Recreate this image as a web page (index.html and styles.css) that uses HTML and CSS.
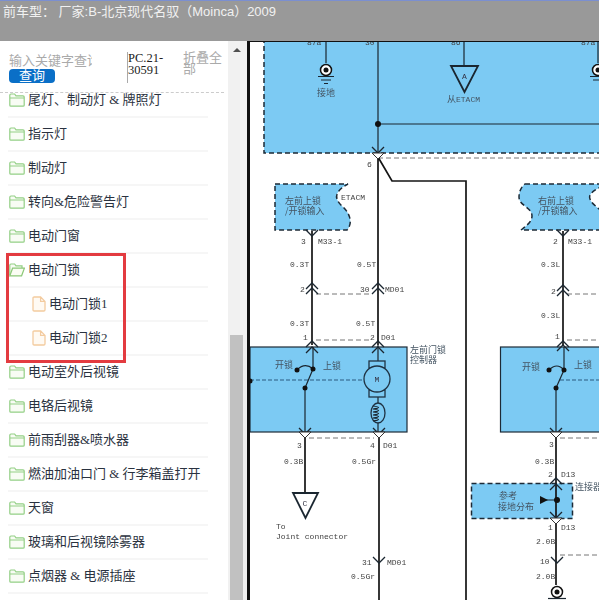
FILE: index.html
```html
<!DOCTYPE html>
<html lang="zh">
<head>
<meta charset="utf-8">
<title>电动门锁</title>
<link rel="stylesheet" href="styles.css">
</head>
<body>
<svg class="defs" width="0" height="0">
  <defs>
    <symbol id="folder" viewBox="0 0 16 14"><path class="fo" d="M.8 12.2V2.2Q.8 1 2 1H5.6L7 2.8H14Q15.2 2.8 15.2 4V12.2Q15.2 13.2 14 13.2H2Q.8 13.2.8 12.2ZM.8 5H15.2"/></symbol>
    <symbol id="folder-open" viewBox="0 0 16 14"><path class="fo" d="M.8 12V2.2Q.8 1 2 1H5.6L7 2.8H13V5"/><path class="fo-open" d="M.8 12.8 3.6 5.2H15.4L12.6 12.8Z"/></symbol>
    <symbol id="file" viewBox="0 0 14 16"><path class="fi" d="M1 2.2Q1 1 2.2 1H8.6L13 5.4V13.8Q13 15 11.8 15H2.2Q1 15 1 13.8ZM8.6 1V5.4H13"/></symbol>
    <path id="vee" d="M-6-6 0 0 6-6"/>
    <path id="hat" d="M-6 6 0 0 6 6"/>
  </defs>
</svg>

<header class="topbar">前车型： 厂家:B-北京现代名驭（Moinca）2009</header>

<div class="main">
  <aside class="sidebar">
    <div class="panel">
      <div class="search">
        <div class="search-left">
          <input class="kw" type="text" placeholder="输入关键字查询">
          <button class="go" type="button">查询</button>
        </div>
        <div class="code">PC.21-30591</div>
        <div class="fold">折叠全部</div>
      </div>
      <ul class="tree">
        <li class="row first"><svg class="ico"><use href="#folder"/></svg>尾灯、制动灯 &amp; 牌照灯</li>
        <li class="row"><svg class="ico"><use href="#folder"/></svg>指示灯</li>
        <li class="row"><svg class="ico"><use href="#folder"/></svg>制动灯</li>
        <li class="row"><svg class="ico"><use href="#folder"/></svg>转向&amp;危险警告灯</li>
        <li class="row"><svg class="ico"><use href="#folder"/></svg>电动门窗</li>
        <li class="row"><svg class="ico"><use href="#folder-open"/></svg>电动门锁</li>
        <li class="row child"><svg class="ico-file"><use href="#file"/></svg>电动门锁1</li>
        <li class="row child"><svg class="ico-file"><use href="#file"/></svg>电动门锁2</li>
        <li class="row"><svg class="ico"><use href="#folder"/></svg>电动室外后视镜</li>
        <li class="row"><svg class="ico"><use href="#folder"/></svg>电铬后视镜</li>
        <li class="row"><svg class="ico"><use href="#folder"/></svg>前雨刮器&amp;喷水器</li>
        <li class="row"><svg class="ico"><use href="#folder"/></svg>燃油加油口门 &amp; 行李箱盖打开</li>
        <li class="row"><svg class="ico"><use href="#folder"/></svg>天窗</li>
        <li class="row"><svg class="ico"><use href="#folder"/></svg>玻璃和后视镜除雾器</li>
        <li class="row"><svg class="ico"><use href="#folder"/></svg>点烟器 &amp; 电源插座</li>
      </ul>
      <div class="mark"></div>
    </div>
    <div class="scroll">
      <div class="arrow"></div>
      <div class="thumb"></div>
    </div>
  </aside>

  <section class="pane">
    <svg class="diagram" viewBox="250 42 349 558" width="349" height="558">
      <!-- blue areas -->
      <path class="area dash" d="M264 30V153H620V30Z"/>
      <path class="area dash" d="M275 184H348C340 188 335 194 337 199C339 206 348 208 350 219C351 224 349 228 347 230H275Z"/>
      <path class="area dash" d="M525 184H620V230H521C526 226 532 222 532 216C532 207 519 206 519 197C519 191 522 186 525 184Z"/>
      <path class="notch" d="M603 186C594 190 588 194 590 199C592 205 600 208 603 214"/>
      <rect class="area solid" x="250" y="347" width="157" height="85"/>
      <rect class="area solid" x="500.500" y="347" width="130" height="85"/>
      <rect class="area dash" x="471.500" y="483.500" width="101" height="35"/>

      <!-- thin dashes between connectors -->
      <path class="thin-dash" d="M378 158H599M316 294H370M316 340H372M567 294H599M567 340H599M309 438H374M560 438H599M560 555H599"/>
      <path class="inner-dash" d="M250 380H364M560 380H599"/>

      <!-- wires -->
      <path class="wire" d="M326 36V63M464 36V66M378 36V157M378 124H599M598 36V63"/>
      <path class="heavy" d="M378 157V345M378 157 392 181H466V600M312 231V345M379 432V600M305 432V493M563 231V345M556 432V585"/>
      <path class="wire" d="M378 345V368M378 392V432M305 388V432M313 369 305 388M313 347V369M556 388V432M564 370 556 388M564 347V370M540 500H557M297 370Q305 362 313 369M549 370Q557 362 564 370"/>

      <!-- connectors -->
      <g class="chev">
        <use href="#vee" x="378" y="153"/><use href="#vee" x="312" y="236"/><use href="#vee" x="563" y="236"/>
        <use href="#hat" x="312" y="283"/><use href="#hat" x="312" y="288"/><use href="#hat" x="378" y="283"/><use href="#hat" x="378" y="288"/>
        <use href="#hat" x="563" y="285"/><use href="#hat" x="563" y="290"/>
        <use href="#hat" x="312" y="341"/><use href="#hat" x="378" y="341"/><use href="#hat" x="563" y="341"/>
        <use href="#hat" x="312" y="347"/><use href="#hat" x="378" y="347"/><use href="#hat" x="563" y="345"/>
        <use href="#vee" x="305" y="434"/><use href="#vee" x="379" y="434"/><use href="#vee" x="556" y="434"/>
        <use href="#vee" x="379" y="563"/><use href="#vee" x="557" y="563"/>
        <use href="#hat" x="556" y="478"/><use href="#hat" x="556" y="484"/>
        <use href="#vee" x="556" y="518"/>
      </g>
      <path class="tip" d="M372 153H384L378 159ZM299 432H311L305 438ZM373 432H385L379 438ZM550 432H562L556 438ZM550 518H562L556 524Z"/>

      <!-- grounds -->
      <circle class="gnd" cx="326" cy="70" r="5.500"/><circle class="dot" cx="326" cy="70" r="2.500"/>
      <path class="wire" d="M318 76.500H334M321 80H331M324 83.500H328"/>
      <circle class="gnd" cx="598" cy="70" r="5.500"/><circle class="dot" cx="598" cy="70" r="2.500"/>
      <path class="wire" d="M590 76.500H606M593 80H603"/>
      <circle class="gnd" cx="557" cy="592" r="5.500"/><circle class="dot" cx="557" cy="592" r="2.500"/>
      <path class="wire" d="M548 598.500H566"/>

      <!-- triangles -->
      <path class="tri" d="M451 66H478L464.500 92Z"/>
      <path class="tri" d="M293 493H318L305.500 518Z"/>

      <!-- dots -->
      <circle class="dot" cx="378" cy="124" r="3"/>
      <circle class="dot" cx="297" cy="370" r="2.500"/>
      <circle class="dot" cx="313" cy="369" r="2.500"/>
      <circle class="dot" cx="305" cy="388" r="2.500"/>
      <circle class="dot" cx="250" cy="381" r="2.500"/>
      <circle class="dot" cx="549" cy="370" r="2.500"/>
      <circle class="dot" cx="564" cy="370" r="2.500"/>
      <circle class="dot" cx="556" cy="388" r="2.500"/>
      <circle class="dot" cx="557" cy="500" r="3"/>
      <path class="solid-tri" d="M540 496V504L548 500Z"/>

      <!-- motor -->
      <rect class="motor" x="369" y="361" width="16" height="7"/>
      <rect class="motor" x="369" y="390" width="16" height="7"/>
      <circle class="motor" cx="377" cy="379" r="13"/>
      <ellipse class="motor" cx="378" cy="413" rx="7" ry="10"/>
      <path class="wire" d="M373 406Q384 407.500 373 409Q384 410.500 373 412Q384 413.500 373 415Q384 416.500 373 418Q384 419.500 373 421"/>

      <!-- text -->
      <g class="mono">
        <text x="307" y="45">87a</text><text x="365" y="45">30</text><text x="451" y="45">86</text><text x="581" y="45">87a</text>
        <text x="367" y="167">6</text><text x="341" y="200">ETACM</text>
        <text x="301" y="244">3</text><text x="318" y="244">M33-1</text>
        <text x="290" y="267">0.3T</text><text x="357" y="267">0.5T</text>
        <text x="300" y="292">2</text><text x="360" y="292">30</text><text x="385" y="292">MD01</text>
        <text x="290" y="326">0.3T</text><text x="356" y="326">0.5T</text>
        <text x="303" y="340">1</text><text x="370" y="340">2</text><text x="381" y="340">D01</text>
        <text x="297" y="448">3</text><text x="370" y="448">4</text><text x="383" y="448">D01</text>
        <text x="284" y="464">0.3B</text><text x="352" y="464">0.5Gr</text>
        <text x="276" y="529">To</text><text x="276" y="539">Joint connector</text>
        <text x="362" y="565">31</text><text x="387" y="565">MD01</text>
        <text x="351" y="579">0.5Gr</text>
        <text x="553" y="244">2</text><text x="568" y="244">M33-1</text>
        <text x="541" y="267">0.3L</text><text x="551" y="294">2</text>
        <text x="541" y="318">0.3L</text><text x="555" y="339">1</text>
        <text x="549" y="447">3</text><text x="535" y="464">0.3B</text>
        <text x="548" y="477">2</text><text x="561" y="477">D13</text>
        <text x="548" y="530">1</text><text x="561" y="530">D13</text>
        <text x="536" y="544">2.0B</text><text x="540" y="564">10</text><text x="536" y="579">2.0B</text>
        <text class="center" x="464.500" y="79">A</text><text class="center" x="305" y="506">C</text><text class="center" x="377" y="382">M</text>
      </g>
      <g class="cn">
        <text x="317" y="96">接地</text><text x="447" y="102">从<tspan class="mono-in">ETACM</tspan></text>
        <text x="285" y="204">左前上锁</text><text x="285" y="214">/开锁输入</text>
        <text x="538" y="204">右前上锁</text><text x="538" y="214">/开锁输入</text>
        <text x="275" y="368">开锁</text><text x="323" y="369">上锁</text>
        <text x="522" y="370">开锁</text><text x="574" y="368">上锁</text>
        <text x="410" y="353">左前门锁</text><text x="410" y="363">控制器</text>
        <text x="575" y="490">连接器</text>
        <text x="499" y="499">参考</text><text x="498" y="510">接地分布</text>
      </g>
    </svg>
  </section>
</div>
</body>
</html>
```
FILE: styles.css
```css
* { box-sizing: border-box; }
html, body { margin: 0; padding: 0; height: 600px; overflow: hidden; background: #fff; }
.defs { position: absolute; }

.topbar {
  height: 41px;
  padding: 3px 0 0 3px;
  background: #999;
  border-top: 1px solid #7b8fd0;
  color: #f1f1f1;
  font: 13px/16px "Liberation Sans", "Noto Sans CJK SC", sans-serif;
  white-space: pre;
}

.main { display: flex; height: 559px; }

.sidebar { display: flex; width: 247px; flex: none; }
.panel { position: relative; width: 228px; flex: none; overflow: hidden; }

.search {
  display: flex;
  height: 52px;
  margin-right: 4px;
  padding: 11px 0 0 9px;
  border-bottom: 1px dashed #ccc;
}
.search-left { width: 118px; flex: none; display: flex; flex-direction: column; align-items: flex-start; }
.kw {
  width: 83px;
  height: 17px;
  padding: 0;
  border: 0;
  background: transparent;
  outline: 0;
  font: 13px/17px "Liberation Serif", "Noto Sans CJK SC", serif;
}
.kw::placeholder { color: #aaa; opacity: 1; }
.go {
  width: 46px;
  height: 14px;
  padding: 0;
  border: 0;
  border-radius: 4px;
  background: #0a6fc7;
  color: #fff;
  font: 13px/14px "Liberation Serif", "Noto Sans CJK SC", serif;
}
.code {
  width: 56px;
  height: 31px;
  flex: none;
  border-left: 1px solid #aaa;
  color: #222;
  font: 12.500px/12px "Liberation Serif", "Noto Sans CJK SC", serif;
}
.fold {
  width: 39px;
  flex: none;
  color: #aaa;
  font: 13px/11px "Liberation Serif", "Noto Sans CJK SC", serif;
}

.tree { margin: 0; padding: 0; list-style: none; }
.row {
  display: flex;
  align-items: center;
  width: 200px;
  height: 34px;
  margin-left: 8px;
  white-space: nowrap;
  border-bottom: 2px solid #f6f6f6;
  color: #2a3240;
  font: 13px/16px "Liberation Serif", "Noto Sans CJK SC", serif;
}
.row.first { margin-top: -9px; }
.row.child { padding-left: 24px; }
.ico { width: 16px; height: 14px; margin: 0 3px 0 1px; flex: none; }
.ico-file { width: 14px; height: 16px; margin-right: 3px; flex: none; }
.fo { fill: #f8fcf4; stroke: #93cf85; stroke-width: 1.2; }
.fo-open { fill: #fbfdf4; stroke: #8cc878; stroke-width: 1.2; }
.fi { fill: #fffaf3; stroke: #f3cb9f; stroke-width: 1.3; }

.mark {
  position: absolute;
  left: 6px;
  top: 212px;
  width: 120px;
  height: 110px;
  border: 3px solid #e33b40;
}

.scroll { position: relative; flex: 1; background: #f1f1f1; }
.arrow {
  position: absolute;
  left: 5px;
  top: 7px;
  border: 4px solid transparent;
  border-top: 0;
  border-bottom: 4px solid #505050;
}
.thumb {
  position: absolute;
  left: 2px;
  top: 294px;
  bottom: 0;
  width: 13px;
  background: #c1c1c1;
}

.pane {
  flex: 1;
  overflow: hidden;
  border-left: 3px solid #111;
  border-top: 1px solid #111;
  background: #fff;
}
.diagram { display: block; filter: blur(.45px); }

.area { fill: #7ccaf3; }
.dash { stroke: #1d2a36; stroke-width: 1.5; stroke-dasharray: 5 3; }
.solid { stroke: #1d2a36; stroke-width: 1.2; }
.notch { fill: #fff; stroke: #1d2a36; stroke-width: 1.5; stroke-dasharray: 5 3; }
.thin-dash { fill: none; stroke: #777; stroke-width: 1; stroke-dasharray: 5 3; }
.inner-dash { fill: none; stroke: #2a5a80; stroke-width: 1; stroke-dasharray: 4 2; }
.wire { fill: none; stroke: #1a2630; stroke-width: 1.2; }
.heavy { fill: none; stroke: #151515; stroke-width: 1.7; }
.chev use { fill: none; stroke: #1a2630; stroke-width: 1.3; }
.tip { fill: #fff; stroke: #333; stroke-width: 1; }
.gnd { fill: #fff; stroke: #111; stroke-width: 1.5; }
.dot, .solid-tri { fill: #111; }
.tri { fill: none; stroke: #1a2630; stroke-width: 1.8; }
.motor { fill: #7ccaf3; stroke: #1f3344; stroke-width: 1.3; }

.mono text { font: 8px "Liberation Mono", monospace; fill: #444; }
.mono text.center { text-anchor: middle; fill: #334; }
.cn text { font: 9px "Noto Sans CJK SC", sans-serif; fill: #445462; }
.mono-in { font: 8px "Liberation Mono", monospace; }
```
